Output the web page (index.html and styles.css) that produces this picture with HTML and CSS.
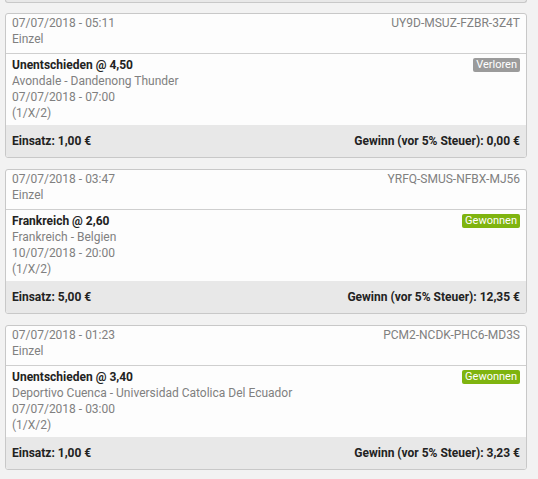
FILE: index.html
```html
<!DOCTYPE html>
<html lang="de">
<head>
    <meta charset="UTF-8">
    <meta name="viewport" content="width=device-width, initial-scale=1.0">
    <title>Meine Wetten</title>
    <link rel="stylesheet" href="styles.css">
</head>
<body>
    <main class="bets">
        <div class="stub"></div>

        <div class="ticket">
            <div class="ticket-head">
                <div>
                    <div>07/07/2018 - 05:11</div>
                    <div>Einzel</div>
                </div>
                <div>UY9D-MSUZ-FZBR-3Z4T</div>
            </div>
            <div class="ticket-sel">
                <div>
                    <div class="pick">Unentschieden @ 4,50</div>
                    <div>Avondale - Dandenong Thunder</div>
                    <div>07/07/2018 - 07:00</div>
                    <div>(1/X/2)</div>
                </div>
                <span class="badge lost">Verloren</span>
            </div>
            <div class="ticket-foot">
                <span>Einsatz: 1,00 €</span>
                <span>Gewinn (vor 5% Steuer): 0,00 €</span>
            </div>
        </div>

        <div class="ticket">
            <div class="ticket-head">
                <div>
                    <div>07/07/2018 - 03:47</div>
                    <div>Einzel</div>
                </div>
                <div>YRFQ-SMUS-NFBX-MJ56</div>
            </div>
            <div class="ticket-sel">
                <div>
                    <div class="pick">Frankreich @ 2,60</div>
                    <div>Frankreich - Belgien</div>
                    <div>10/07/2018 - 20:00</div>
                    <div>(1/X/2)</div>
                </div>
                <span class="badge won">Gewonnen</span>
            </div>
            <div class="ticket-foot">
                <span>Einsatz: 5,00 €</span>
                <span>Gewinn (vor 5% Steuer): 12,35 €</span>
            </div>
        </div>

        <div class="ticket">
            <div class="ticket-head">
                <div>
                    <div>07/07/2018 - 01:23</div>
                    <div>Einzel</div>
                </div>
                <div>PCM2-NCDK-PHC6-MD3S</div>
            </div>
            <div class="ticket-sel">
                <div>
                    <div class="pick">Unentschieden @ 3,40</div>
                    <div>Deportivo Cuenca - Universidad Catolica Del Ecuador</div>
                    <div>07/07/2018 - 03:00</div>
                    <div>(1/X/2)</div>
                </div>
                <span class="badge won">Gewonnen</span>
            </div>
            <div class="ticket-foot">
                <span>Einsatz: 1,00 €</span>
                <span>Gewinn (vor 5% Steuer): 3,23 €</span>
            </div>
        </div>
    </main>
</body>
</html>
```

FILE: styles.css
```css
body {
    font-family: 'Roboto', 'Liberation Sans', sans-serif;
    font-size: 12px;
    line-height: 16px;
    margin: 0;
    padding: 0;
    background-color: #f2f2f2;
    color: #808080;
}

.bets {
    padding: 0 11px 0 5px;
}

/* bottom edge of the previous ticket */
.stub {
    height: 2px;
    background-color: #e8e8e8;
    border: 1px solid #c8c8c8;
    border-top: none;
    border-radius: 0 0 3px 3px;
    margin-bottom: 10px;
}

.ticket {
    background-color: #fdfdfd;
    border: 1px solid #c8c8c8;
    border-radius: 3px;
    margin-bottom: 11px;
    overflow: hidden;
}

.ticket-head {
    display: flex;
    justify-content: space-between;
    padding: 1px 6px 6px;
    border-bottom: 1px solid #cfcfcf;
}

.ticket-sel {
    display: flex;
    justify-content: space-between;
    align-items: flex-start;
    padding: 3px 6px 4px;
}

.pick {
    font-weight: bold;
    color: #222;
}

.badge {
    color: #fff;
    font-size: 11px;
    line-height: 14px;
    padding: 0 3px;
    border-radius: 2px;
    margin-top: 1px;
}

.badge.lost {
    background-color: #9b9b9b;
}

.badge.won {
    background-color: #7fb40f;
}

.ticket-foot {
    display: flex;
    justify-content: space-between;
    padding: 8px 6px;
    background-color: #e8e8e8;
    font-weight: bold;
    color: #222;
}
```
